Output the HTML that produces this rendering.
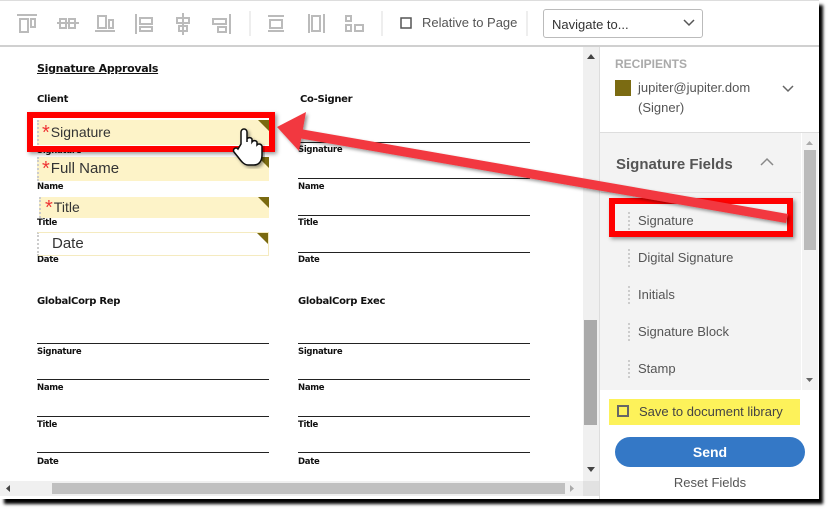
<!DOCTYPE html>
<html><head><meta charset="utf-8"><style>
*{margin:0;padding:0;box-sizing:border-box}
body{width:830px;height:511px;background:#fff;position:relative;overflow:hidden;font-family:"Liberation Sans",sans-serif}
.a{position:absolute}
.frame{left:0;top:0;width:819px;height:499px;background:#fff;border-top:1px solid #ddd;box-shadow:4px 5px 3px #000}
.doc{font-family:"DejaVu Sans",sans-serif;color:#111}
.h{font-size:10px;font-weight:bold;letter-spacing:-0.3px}
.lb{font-size:8.5px;font-weight:bold;letter-spacing:-0.3px}
.ln{height:1px;background:#222}
.fld{background:#fdf3c8;font-size:14px;color:#333;padding-left:10px;border-left:2px dotted #ccc}
.fld .tri{position:absolute;right:0;top:0;width:0;height:0;border-top:11px solid #7a6a10;border-left:11px solid transparent}
.st{color:#e33;font-size:20px;position:relative;top:2px;margin-right:1px;line-height:10px}
.ps{color:#555;font-size:13px}
.it{left:628px;font-size:13px;color:#555;padding-left:8px;border-left:2px dotted #ccc;line-height:18px}
</style></head><body>
<div class="a frame"></div>
<svg class="a" style="left:0;top:0" width="720" height="46">
<g fill="none" stroke="#bbb" stroke-width="2">
<path d="M17 15h20M20 19h8v13h-8zM31 19h4v8h-4z"/>
<path d="M57 23h22M60 19h6v9h-6zM69 19h6v9h-6z"/>
<path d="M95 31h20M98 16h8v12h-8zM109 20h4v8h-4z"/>
<path d="M136 14v20M140 18h12v6h-12zM140 27h12v4h-12z"/>
<path d="M183 13v22M177 18h12v5h-12zM179 26h8v5h-8z"/>
<path d="M230 14v20M213 19h13v5h-13zM218 27h8v5h-8z"/>
<path d="M268 16h16M268 31h16M270 20h12v8h-12z"/>
<path d="M309 14v19M324 14v19M312 16h8v15h-8z"/>
<path d="M346 16h5v5h-5zM346 25h5v6h-5zM355 25h8v6h-8z"/>
</g>
<path d="M250 11v25M382 11v25M527 11v25" stroke="#ddd"/>
<rect x="401" y="18" width="10" height="10" fill="none" stroke="#555" stroke-width="1.5"/>
</svg>
<div class="a ps" style="left:422px;top:15px">Relative to Page</div>
<div class="a" style="left:543px;top:9px;width:160px;height:29px;border:1px solid #bbb;border-radius:3px;font-size:13px;color:#333;padding:7px 0 0 8px">Navigate to...</div>
<svg class="a" style="left:683px;top:18px" width="12" height="10"><path d="M1 2l5 5 5-5" fill="none" stroke="#555" stroke-width="1.5"/></svg>
<div class="a" style="left:0;top:45px;width:819px;height:2px;background:#d0d0d0"></div>
<div class="doc">
<div class="a h" style="left:37px;top:62px;text-decoration:underline;font-size:11px">Signature Approvals</div>
<div class="a h" style="left:37px;top:94px">Client</div>
<div class="a h" style="left:300px;top:94px">Co-Signer</div>
<div class="a h" style="left:37px;top:296px">GlobalCorp Rep</div>
<div class="a h" style="left:298px;top:296px">GlobalCorp Exec</div>
<div class="a lb" style="left:37px;top:146px">Signature</div>
<div class="a lb" style="left:37px;top:182px">Name</div>
<div class="a lb" style="left:37px;top:218px">Title</div>
<div class="a lb" style="left:37px;top:255px">Date</div>
<div class="a ln" style="left:298px;top:142px;width:232px"></div><div class="a lb" style="left:298px;top:145px">Signature</div>
<div class="a ln" style="left:298px;top:178px;width:232px"></div><div class="a lb" style="left:298px;top:182px">Name</div>
<div class="a ln" style="left:298px;top:215px;width:232px"></div><div class="a lb" style="left:298px;top:218px">Title</div>
<div class="a ln" style="left:298px;top:252px;width:232px"></div><div class="a lb" style="left:298px;top:255px">Date</div>
<div class="a ln" style="left:37px;top:343px;width:232px"></div><div class="a lb" style="left:37px;top:347px">Signature</div>
<div class="a ln" style="left:37px;top:379px;width:232px"></div><div class="a lb" style="left:37px;top:383px">Name</div>
<div class="a ln" style="left:37px;top:416px;width:232px"></div><div class="a lb" style="left:37px;top:420px">Title</div>
<div class="a ln" style="left:37px;top:452px;width:232px"></div><div class="a lb" style="left:37px;top:457px">Date</div>
<div class="a ln" style="left:298px;top:343px;width:232px"></div><div class="a lb" style="left:298px;top:347px">Signature</div>
<div class="a ln" style="left:298px;top:379px;width:232px"></div><div class="a lb" style="left:298px;top:383px">Name</div>
<div class="a ln" style="left:298px;top:416px;width:232px"></div><div class="a lb" style="left:298px;top:420px">Title</div>
<div class="a ln" style="left:298px;top:452px;width:232px"></div><div class="a lb" style="left:298px;top:457px">Date</div>
</div>
<div class="a fld" style="left:37px;top:120px;width:232px;height:25px;line-height:25px;padding-left:3px"><span class="st">*</span>Signature<span class="tri"></span></div>
<div class="a fld" style="left:37px;top:157px;width:232px;height:24px;line-height:24px;padding-left:3px;font-size:15px"><span class="st">*</span>Full Name<span class="tri"></span></div>
<div class="a fld" style="left:39px;top:197px;width:230px;height:21px;line-height:21px;padding-left:4px"><span class="st">*</span>Title<span class="tri"></span></div>
<div class="a fld" style="left:37px;top:232px;width:232px;height:24px;line-height:22px;padding-left:13px;background:#fff;border:1px solid #f5ebc0;border-left:2px dotted #ccc;font-size:15px">Date<span class="tri"></span></div>
<div class="a" style="left:27px;top:112px;width:248px;height:40px;border:6px solid #f00;box-shadow:2px 2px 4px rgba(0,0,0,.4)"></div>
<div class="a" style="left:583px;top:47px;width:16px;height:434px;background:#f0f0f0"></div>
<div class="a" style="left:584px;top:320px;width:13px;height:105px;background:#aaa"></div>
<svg class="a" style="left:583px;top:50px" width="16" height="430"><path d="M4 9h8l-4-5z M4 417h8l-4 5z" fill="#444"/></svg>
<div class="a" style="left:0;top:481px;width:599px;height:15px;background:#f0f0f0"></div>
<div class="a" style="left:52px;top:483px;width:513px;height:11px;background:#c0c0c0"></div>
<svg class="a" style="left:0;top:481px" width="600" height="15"><path d="M10 4v7l-4-3.5z" fill="#444"/><path d="M570 4v7l4-3.5z" fill="#aaa"/><rect x="583" y="0" width="16" height="15" fill="#e2e2e2"/></svg>
<div class="a" style="left:599px;top:47px;width:1px;height:452px;background:#ddd"></div>
<div class="a" style="left:615px;top:57px;font-size:12px;font-weight:bold;color:#aaa">RECIPIENTS</div>
<div class="a" style="left:615px;top:80px;width:16px;height:16px;background:#7b6b12"></div>
<div class="a ps" style="left:638px;top:80px">jupiter@jupiter.dom</div>
<div class="a ps" style="left:638px;top:100px">(Signer)</div>
<svg class="a" style="left:781px;top:84px" width="14" height="10"><path d="M2 2l5 5 5-5" fill="none" stroke="#666" stroke-width="1.5"/></svg>
<div class="a" style="left:600px;top:132px;width:219px;height:1px;background:#ddd"></div>
<div class="a" style="left:600px;top:133px;width:201px;height:257px;background:#f3f3f3"></div>
<div class="a" style="left:601px;top:192px;width:200px;height:1px;background:#e2e2e2"></div>
<div class="a" style="left:616px;top:156px;font-size:15px;font-weight:bold;color:#555">Signature Fields</div>
<svg class="a" style="left:759px;top:157px" width="16" height="10"><path d="M2 8l6-6 6 6" fill="none" stroke="#888" stroke-width="1.5"/></svg>
<div class="a" style="left:802px;top:133px;width:16px;height:257px;background:#f3f3f3"></div>
<div class="a" style="left:804px;top:150px;width:12px;height:100px;background:#bbb"></div>
<svg class="a" style="left:802px;top:137px" width="16" height="250"><path d="M4 8h7l-3.5-4z" fill="#aaa"/><path d="M4 241h7l-3.5 4z" fill="#666"/></svg>
<div class="a it" style="top:212px">Signature</div>
<div class="a it" style="top:249px">Digital Signature</div>
<div class="a it" style="top:286px">Initials</div>
<div class="a it" style="top:323px">Signature Block</div>
<div class="a it" style="top:360px">Stamp</div>
<div class="a" style="left:609px;top:198px;width:184px;height:39px;border:6px solid #f00;box-shadow:2px 2px 4px rgba(0,0,0,.4)"></div>
<div class="a" style="left:609px;top:399px;width:191px;height:26px;background:#fdf25a"></div>
<div class="a" style="left:617px;top:405px;width:12px;height:12px;border:2px solid #666"></div>
<div class="a ps" style="left:639px;top:404px;color:#444">Save to document library</div>
<div class="a" style="left:615px;top:437px;width:190px;height:30px;background:#3478c6;border-radius:15px;color:#fff;font-weight:bold;font-size:14px;text-align:center;line-height:30px">Send</div>
<div class="a ps" style="left:615px;top:475px;width:190px;text-align:center">Reset Fields</div>
<svg class="a" style="left:0;top:0" width="830" height="511">
<defs><filter id="s"><feDropShadow dx="2" dy="2" stdDeviation="1.5" flood-opacity=".4"/></filter></defs>
<g filter="url(#s)" fill="#f2393f"><path d="M300 129 L788 214 L786 223 L298 138z"/><path d="M277 127 L306 112 L299 151z"/></g>
<path d="M241 144 v-12 a3 3 0 0 1 6 0 v10 l0-3 a3 3 0 0 1 5 0 v3 a3 3 0 0 1 5 0 v3 a3 3 0 0 1 5 1 v9 c0 6 -3 10 -8 10 h-6 c-4 0 -7 -4 -10 -8 l-4 -5 a2.5 2.5 0 0 1 4 -3z" fill="#fff" stroke="#111" stroke-width="1.5" filter="url(#s)"/>
</svg>
</body></html>
